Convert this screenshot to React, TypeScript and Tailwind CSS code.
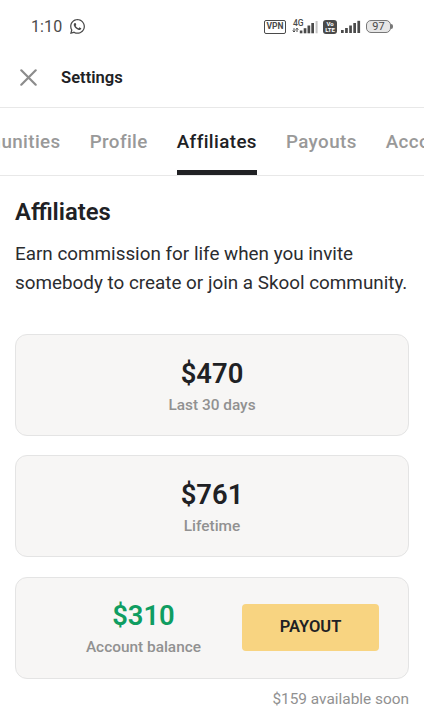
import React from "react";
import { FaWhatsapp } from "react-icons/fa";
import { clsx } from "clsx";

const tabs = ["Communities", "Profile", "Affiliates", "Payouts", "Account"];

const stats = [
  { label: "Last 30 days", value: "$470" },
  { label: "Lifetime", value: "$761" },
];

function SignalBars() {
  return (
    <svg width="20" height="13" viewBox="0 0 20 13" fill="#4a4a4a">
      <rect x="0" y="10" width="2.7" height="3" />
      <rect x="4.1" y="8" width="2.7" height="5" />
      <rect x="8.2" y="5.5" width="2.7" height="7.5" />
      <rect x="12.3" y="3" width="2.7" height="10" />
      <rect x="16.4" y="0.8" width="2.7" height="12.2" />
    </svg>
  );
}

function MobileData() {
  return (
    <svg width="27" height="16" viewBox="0 0 27 16" fill="#4a4a4a">
      <text x="1" y="6.8" fontSize="8.5" fontWeight="500">
        4G
      </text>
      <path d="M2 9.2v3.6M.7 11.6 2 13l1.3-1.4M5 13V9.4M3.7 10.6 5 9.2l1.3 1.4" stroke="#4a4a4a" strokeWidth="1" fill="none" />
      <rect x="7.8" y="11.5" width="2.6" height="2.8" />
      <rect x="11.7" y="9.2" width="2.7" height="5.1" />
      <rect x="15.5" y="6.5" width="2.7" height="7.8" />
      <rect x="19.3" y="4" width="2.7" height="10.3" />
      <rect x="23.6" y="2" width="2" height="12.3" fill="#c4c4c4" />
    </svg>
  );
}

function StatusBar() {
  return (
    <div className="flex h-[53px] items-center justify-between pl-[31px] pr-[31px] text-[#4a4a4a]">
      <div className="flex items-center gap-[7px] text-base tracking-[0.1px]">
        <span className="pt-px">1:10</span>
        <FaWhatsapp className="size-[17px]" />
      </div>

      <div className="flex items-center">
        <span className="flex h-[14px] w-[22px] items-center justify-center rounded-[2px] border-[1.5px] border-[#4a4a4a] text-[8.5px] font-bold leading-none">
          VPN
        </span>
        <span className="ml-[6px]">
          <MobileData />
        </span>
        <span className="ml-[4px] flex h-[14px] w-[14px] flex-col items-center justify-center rounded-[3px] bg-[#4a4a4a] text-[6px] font-bold leading-[6px] text-white">
          <span>Vo</span>
          <span>LTE</span>
        </span>
        <span className="ml-[4px]">
          <SignalBars />
        </span>
        <span className="ml-[5px] flex h-[13px] w-[25px] items-center justify-center rounded-[5px] border border-[#777] bg-[#e6e6e6] text-[11px] leading-none">
          97
        </span>
        <span className="h-[5px] w-[2px] rounded-r-sm bg-[#777]" />
      </div>
    </div>
  );
}

function Header() {
  return (
    <header className="flex h-[55px] items-center gap-[24px] border-b border-[#e8e8e8] pb-[6px] pl-5">
      <svg width="17" height="17" viewBox="0 0 17 17" stroke="#8c8c8c" strokeWidth="2.2" strokeLinecap="round">
        <path d="m1.3 1.3 14.4 14.4M15.7 1.3 1.3 15.7" />
      </svg>
      <h1 className="pt-[2px] text-[16.6px] font-semibold">Settings</h1>
    </header>
  );
}

function Tabs() {
  return (
    <nav className="flex h-[68px] justify-center gap-[29px] overflow-hidden border-b border-[#e8e8e8] pr-[21.5px] text-[18.8px] font-medium tracking-[0.4px]">
      {tabs.map((tab) => (
        <a
          key={tab}
          className={clsx(
            "flex shrink-0 items-center border-b-[5px] pt-[6px]",
            tab === "Affiliates" ? "border-[#202124] text-[#202124]" : "border-transparent text-[#999]"
          )}
        >
          {tab}
        </a>
      ))}
    </nav>
  );
}

function Amount({ value, label, className }: { value: string; label: string; className?: string }) {
  return (
    <div className="flex flex-col items-center pt-[2px]">
      <p className={clsx("text-[27.4px] font-semibold leading-8", className)}>{value}</p>
      <p className="mt-[5px] text-[15.4px] font-medium leading-5 text-[#919191]">{label}</p>
    </div>
  );
}

export default function App() {
  return (
    <div className="h-[720px] w-full overflow-hidden bg-white font-['Roboto',sans-serif] text-[#202124]">
      <StatusBar />
      <Header />
      <Tabs />

      <main className="px-[15px]">
        <h2 className="pt-[20px] text-[23.8px] font-semibold leading-8">Affiliates</h2>
        <p className="mt-[12px] whitespace-nowrap text-[18.85px] leading-[28.5px] text-[#2b2c2f]">
          Earn commission for life when you invite
          <br />
          somebody to create or join a Skool community.
        </p>

        <div className="mt-[37px] flex flex-col gap-[19.4px]">
          {stats.map((stat) => (
            <section
              key={stat.label}
              className="flex h-[102px] items-center justify-center rounded-xl border border-[#e4e4e4] bg-[#f7f6f5]"
            >
              <Amount value={stat.value} label={stat.label} />
            </section>
          ))}

          <section className="flex h-[102px] items-center justify-end gap-[41px] rounded-xl border border-[#e4e4e4] bg-[#f7f6f5] pr-[29px]">
            <Amount value={"$310"} label="Account balance" className="text-[#0f9d61]" />
            <button className="h-[47px] w-[137px] rounded-[4px] bg-[#f8d481] text-[16.5px] font-semibold">
              PAYOUT
            </button>
          </section>
        </div>

        <p className="mt-[10px] text-right text-[15.4px] leading-5 text-[#919191]">$159 available soon</p>
      </main>
    </div>
  );
}
